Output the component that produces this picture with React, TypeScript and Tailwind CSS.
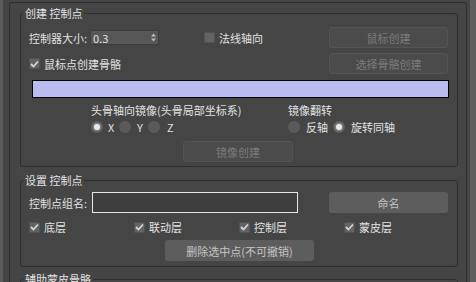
import type { ReactNode } from "react";

function Check({ on }: { on?: boolean }) {
  return (
    <span className="flex h-[11px] w-[11px] shrink-0 items-center justify-center rounded-[1px] bg-[#636363] border border-[#525252]">
      {on && (
        <svg width="9" height="8" viewBox="0 0 9 8">
          <path d="M1 4 L3.5 6.5 L8 1.5" fill="none" stroke="#d4d4d4" strokeWidth="1.8" />
        </svg>
      )}
    </span>
  );
}

function Radio({ on }: { on?: boolean }) {
  return (
    <span className="flex h-[12px] w-[12px] shrink-0 items-center justify-center rounded-full bg-[#5a5a5a]">
      {on && <span className="h-[6px] w-[6px] rounded-full bg-[#e8e8e8] shadow-[0_0_2px_1px_rgba(255,255,255,0.35)]" />}
    </span>
  );
}

function Btn({ children, off, className = "" }: { children: ReactNode; off?: boolean; className?: string }) {
  return (
    <div
      className={`flex h-[21px] items-center justify-center rounded-[3px] ${
        off ? "bg-[#4b4b4b] border border-[#545454] text-[#7a7a7a]" : "bg-[#5d5d5d] text-[#c4c4c4]"
      } ${className}`}
    >
      {children}
    </div>
  );
}

function Group({ title, children, className = "" }: { title: string; children?: ReactNode; className?: string }) {
  return (
    <fieldset className={`mx-[10px] mr-[8px] rounded-[3px] border border-[#2f2f2f] ${className}`}>
      <legend className="ml-[2px] px-[2px] leading-[14px] text-[#e2e2e2]">{title}</legend>
      {children}
    </fieldset>
  );
}

export default function App() {
  return (
    <div className="flex h-[282px] w-[476px] overflow-hidden bg-[#454545] text-[11px] leading-[14px] text-[#e2e2e2] font-['Noto_Sans_CJK_SC','Noto_Sans',sans-serif]">
      <div className="w-[3px] shrink-0 bg-[#5c5c5c]" />
      <div className="ml-[6px] mt-[2px] w-[458px] shrink-0 rounded-t-[3px] border border-b-0 border-[#2e2e2e]">
        {/* 创建 控制点 */}
        <Group title="创建 控制点" className="mt-[3px] pb-[4px]">
          <div className="flex h-[21px] items-center pl-[8px] pr-[9px] mt-[7px]">
            <span className="w-[61px]">控制器大小:</span>
            <div className="flex h-[15px] w-[69px] items-center justify-between rounded-[1px] border border-[#3d3d3d] bg-[#575757] pl-[2px] pr-[2px]">
              <span>0.3</span>
              <svg width="5" height="9" viewBox="0 0 5 9">
                <path d="M0 3.5 L2.5 0.5 L5 3.5 Z M0 5.5 L2.5 8.5 L5 5.5 Z" fill="#bdbdbd" />
              </svg>
            </div>
            <span className="ml-[45px]"><Check /></span>
            <span className="ml-[4px]">法线轴向</span>
            <Btn off className="ml-auto w-[119px]">鼠标创建</Btn>
          </div>
          <div className="flex h-[21px] items-center pl-[8px] pr-[9px] mt-[5px]">
            <Check on />
            <span className="ml-[4px]">鼠标点创建骨骼</span>
            <Btn off className="ml-auto w-[119px]">选择骨骼创建</Btn>
          </div>
          <div className="ml-[11px] mr-[8px] mt-[6px] h-[18px] border border-black bg-[#b8bdf0]" />
          <div className="mt-[5px] flex pl-[70px]">
            <span className="w-[197px]">头骨轴向镜像(头骨局部坐标系)</span>
            <span>镜像翻转</span>
          </div>
          <div className="mt-[4px] flex h-[12px] items-center pl-[70px]">
            <div className="flex w-[197px] items-center">
              <div className="flex w-[28px] items-center gap-[5px]"><Radio on /><span>X</span></div>
              <div className="flex w-[29px] items-center gap-[6px]"><Radio /><span>Y</span></div>
              <div className="flex items-center gap-[7px]"><Radio /><span>Z</span></div>
            </div>
            <div className="flex w-[45px] items-center gap-[6px]"><Radio /><span>反轴</span></div>
            <div className="flex items-center gap-[6px]"><Radio on /><span>旋转同轴</span></div>
          </div>
          <div className="mt-[8px] pl-[162px]">
            <Btn off className="w-[110px]">镜像创建</Btn>
          </div>
        </Group>

        {/* 设置 控制点 */}
        <Group title="设置 控制点" className="mt-[6px] pb-[5px]">
          <div className="mt-[5px] flex h-[21px] items-center pl-[8px] pr-[9px]">
            <span className="w-[63px]">控制点组名:</span>
            <div className="h-[21px] w-[206px] border border-[#e6e6e6] bg-[#3e3e3e]" />
            <Btn className="ml-auto w-[119px]">命名</Btn>
          </div>
          <div className="mt-[8px] flex h-[12px] items-center pl-[8px]">
            {["底层", "联动层", "控制层", "蒙皮层"].map(t => (
              <div key={t} className="flex w-[105px] items-center gap-[4px]">
                <Check on />
                <span>{t}</span>
              </div>
            ))}
          </div>
          <div className="mt-[7px] pl-[144px]">
            <Btn className="w-[149px]">删除选中点(不可撤销)</Btn>
          </div>
        </Group>

        {/* 辅助蒙皮骨骼 */}
        <Group title="辅助蒙皮骨骼" className="mt-[5px] h-[40px]" />
      </div>
      <div className="ml-[3px] w-[6px] shrink-0 bg-[#5e5e5e]" />
    </div>
  );
}
